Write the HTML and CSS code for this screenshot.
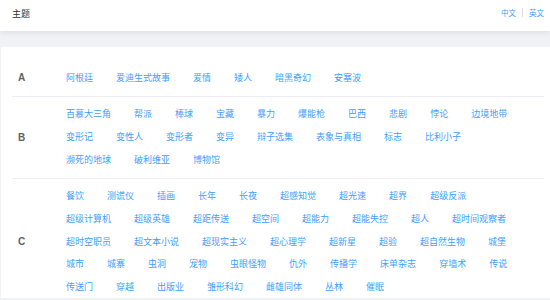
FILE: index.html
```html
<!DOCTYPE html>
<html lang="zh">
<head>
  <meta charset="UTF-8" />
  <title>主题</title>
  <link rel="stylesheet" href="styles.css">
</head>
<body>
  <header class="topbar">
    <div class="title">主题</div>
    <div class="lang">
      <a class="active">中文</a>
      <span class="sep"></span>
      <a>英文</a>
    </div>
  </header>
  <div class="band"></div>
  <div class="card">
    <div class="group">
      <div class="letter">A</div>
      <div class="tags">
        <a>阿根廷</a><a>爱迪生式故事</a><a>爱情</a><a>矮人</a><a>暗黑奇幻</a><a>安塞波</a>
      </div>
    </div>
    <div class="group">
      <div class="letter">B</div>
      <div class="tags">
        <a>百慕大三角</a><a>帮派</a><a>棒球</a><a>宝藏</a><a>暴力</a><a>爆能枪</a><a>巴西</a><a>悲剧</a><a>悖论</a><a>边境地带</a>
        <a>变形记</a><a>变性人</a><a>变形者</a><a>变异</a><a>辩子选集</a><a>表象与真相</a><a>标志</a><a>比利小子</a>
        <a>濒死的地球</a><a>破利维亚</a><a>博物馆</a>
      </div>
    </div>
    <div class="group">
      <div class="letter">C</div>
      <div class="tags">
        <a>餐饮</a><a>测谎仪</a><a>插画</a><a>长年</a><a>长夜</a><a>超感知觉</a><a>超光速</a><a>超界</a><a>超级反派</a>
        <a>超级计算机</a><a>超级英雄</a><a>超距传送</a><a>超空间</a><a>超能力</a><a>超能失控</a><a>超人</a><a>超时间观察者</a>
        <a>超时空职员</a><a>超文本小说</a><a>超现实主义</a><a>超心理学</a><a>超新星</a><a>超验</a><a>超自然生物</a><a>城堡</a>
        <a>城市</a><a>城寨</a><a>虫洞</a><a>宠物</a><a>虫眼怪物</a><a>仇外</a><a>传播学</a><a>床单杂志</a><a>穿墙术</a><a>传说</a>
        <a>传送门</a><a>穿越</a><a>出版业</a><a>雏形科幻</a><a>雌雄同体</a><a>丛林</a><a>催眠</a>
      </div>
    </div>
  </div>
</body>
</html>
```

FILE: styles.css
```css
body {
  margin: 0;
  background: #f0f2f5;
  font-family: "Noto Sans CJK SC", "Liberation Sans", sans-serif;
}
.topbar {
  display: flex;
  justify-content: space-between;
  height: 31px;
  padding: 0 6px 0 12px;
  background: #fff;
  box-shadow: 0 2px 6px rgba(0, 0, 0, 0.08);
  position: relative;
}
.title {
  font-size: 9px;
  line-height: 27px;
  color: #303133;
}
.lang {
  display: flex;
  align-items: center;
  height: 24px;
  font-size: 7.5px;
}
.lang a {
  color: #409eff;
}
.sep {
  width: 1px;
  height: 9px;
  margin: 0 6px;
  background: #dcdfe6;
}
.band {
  height: 16px;
}
.card {
  margin-left: 1px;
  padding: 13px 6px 0 11px;
  background: #fff;
}
.group {
  display: flex;
  align-items: center;
  padding: 6.6px 0;
  border-bottom: 1px solid #ebeef5;
}
.group:last-child {
  border-bottom: none;
  padding-bottom: 0;
}
.letter {
  width: 54px;
  flex-shrink: 0;
  padding-left: 6px;
  box-sizing: border-box;
  font-family: "Liberation Sans", sans-serif;
  font-size: 10px;
  font-weight: bold;
  color: #606266;
}
.tags {
  flex: 1;
  display: flex;
  flex-wrap: wrap;
}
.tags a {
  margin-right: 23px;
  font-size: 9px;
  line-height: 22.6px;
  color: #409eff;
  white-space: nowrap;
}
```
